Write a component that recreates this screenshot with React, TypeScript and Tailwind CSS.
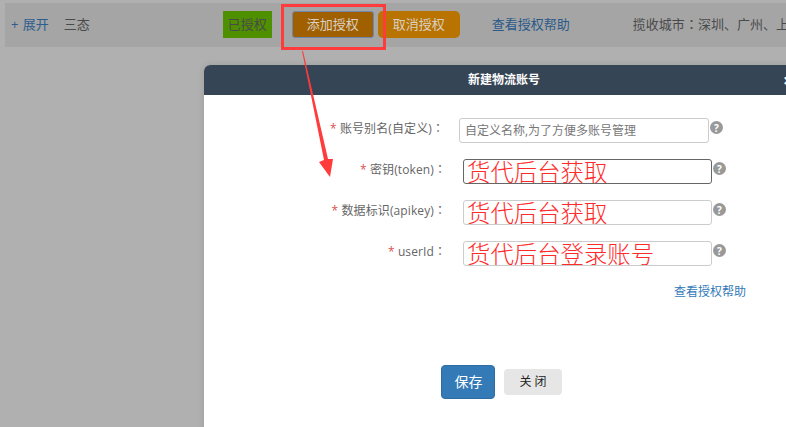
import React from "react";

const cjk = "font-['Open_Sans','Noto_Sans_CJK_SC',sans-serif]";

// 全角冒号 centred, the SC glyph sits in the corner
const Colon = () => <span className="font-['Noto_Sans_CJK_TC',sans-serif]">：</span>;

const Help = () => (
  <span className="ml-[1px] mt-[3px] flex h-[13px] w-[13px] items-center justify-center rounded-full bg-[#999999] text-[10px] font-bold leading-none text-white">
    ?
  </span>
);

const Field = ({ label, note, focus }: { label: string; note: string; focus?: boolean }) => (
  <div className="flex items-start">
    <div className="w-[242px] pt-[1px] text-right text-[12px] leading-[18px] tracking-[0.1px] text-[#666666]">
      <span className="text-[#d9534f]">* </span>
      {label}
      <Colon />
    </div>
    <div
      className={`ml-[17px] flex h-[25px] w-[249px] items-center overflow-hidden rounded-[3px] border pl-[3px] pt-[2px] text-[23.4px] font-light leading-none text-[#ff2a2a] ${
        focus ? "border-[#666666]" : "border-[#cccccc]"
      }`}
    >
      {note}
    </div>
    <Help />
  </div>
);

export default function App() {
  return (
    <div className={`relative h-[427px] w-[786px] overflow-hidden bg-[#b0b0b0] pl-[5px] pt-[3px] ${cjk}`}>
      <div className="flex h-[44px] items-center whitespace-nowrap bg-[#a5a5a5] pb-[1px] text-[13px]">
        <a className="ml-[6px] shrink-0 text-[#2d5d8f]">
          <span className="mr-[1px]">+</span> 展开
        </a>
        <span className="ml-[15px] shrink-0 text-[#4a4a4a]">三态</span>
        <span className="ml-[133px] flex h-[27px] w-[49px] shrink-0 items-center justify-center bg-[#4f9000] text-[#4a4a4a]">已授权</span>
        <button className="ml-[20px] flex h-[27px] w-[82px] shrink-0 items-center justify-center rounded-[3px] border border-[#6f86b0] bg-[#a06000] text-[#d8d0c4]">
          添加授权
        </button>
        <button className="ml-[4px] flex h-[27px] w-[82px] shrink-0 items-center justify-center rounded-[5px] bg-[#b87300] text-[#d8d0c4]">
          取消授权
        </button>
        <a className="ml-[32px] shrink-0 text-[#2a5a8a]">查看授权帮助</a>
        <span className="ml-[63px] shrink-0 text-[#4a4a4a]">
          揽收城市
          <Colon />
          深圳、广州、上海
        </span>
      </div>

      {/* dialog */}
      <div className="absolute left-[204px] top-[65px] h-[420px] w-[600px] rounded-t-[6px] bg-white shadow-[0_0_6px_rgba(0,0,0,0.12)]">
        <div className="relative flex h-[30px] items-center rounded-t-[6px] bg-[#364555]">
          <span className="ml-[264px] text-[12px] font-bold text-white">新建物流账号</span>
          <span className="absolute left-[579px] top-[6px] text-[18px] font-bold leading-none text-white">×</span>
        </div>

        <div className="flex flex-col">
          <div className="mt-[23px] flex items-start">
            <div className="w-[240px] pt-[1px] text-right text-[12px] leading-[18px] tracking-[0.1px] text-[#666666]">
              <span className="text-[#d9534f]">* </span>
              账号别名(自定义)
              <Colon />
            </div>
            <div className="ml-[15px] flex h-[25px] w-[250px] items-center rounded-[3px] border border-[#cccccc] pl-[5px] text-[12px] text-[#777777]">
              自定义名称,为了方便多账号管理
            </div>
            <Help />
          </div>
          <div className="mt-[16px] flex flex-col gap-[16px]">
            <Field label="密钥(token)" note="货代后台获取" focus />
            <Field label="数据标识(apikey)" note="货代后台获取" />
            <Field label="userId" note="货代后台登录账号" />
          </div>
          <a className="ml-[470px] mt-[18px] text-[12px] leading-[16px] text-[#337ab7]">查看授权帮助</a>
          <div className="mt-[65px] flex items-center pl-[237px]">
            <button className="h-[34px] w-[54px] rounded-[4px] border border-[#2e6da4] bg-[#337ab7] pb-[1px] pl-[1px] text-[14px] text-white">保存</button>
            <button className="ml-[9px] h-[26px] w-[58px] rounded-[4px] bg-[#e6e6e6] text-[12px] text-[#222222]">关 闭</button>
          </div>
        </div>
      </div>

      {/* red annotation */}
      <div className="absolute left-[281px] top-[4px] h-[46px] w-[105px] border-[3px] border-[#ff3b3b]" />
      <svg className="absolute left-[295px] top-[48px]" width="45" height="135" viewBox="0 0 45 135">
        <polygon points="7,3 8,3 33,111 38,111 35,129 24,114 29,112" fill="#ff3b3b" />
      </svg>
    </div>
  );
}
